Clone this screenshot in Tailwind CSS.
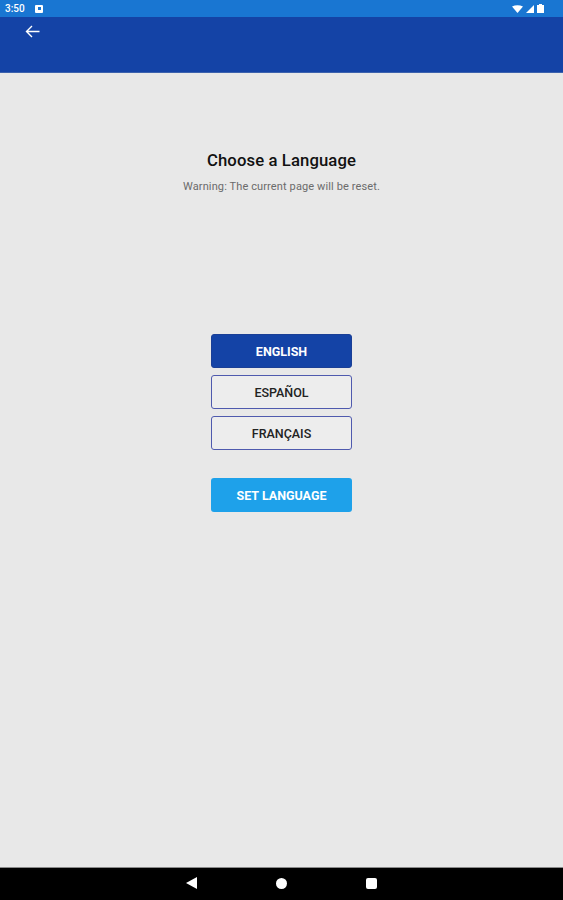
<!DOCTYPE html>
<html lang="en">
<head>
  <meta charset="utf-8" />
  <title>Choose a Language</title>
  <script src="https://cdn.jsdelivr.net/npm/@tailwindcss/browser@4"></script>
</head>
<body class="h-[900px] w-[563px] overflow-hidden flex flex-col bg-[#e8e8e8] font-['Roboto',sans-serif]">
  <!-- status bar -->
  <div class="h-[17px] bg-[#1976d2] flex items-center pl-[5px] pr-[19px] text-white">
    <span class="text-[10px] font-medium leading-none w-[30px]">3:50</span>
    <div class="w-[8px] h-[8px] bg-white rounded-[1px] flex items-center justify-center">
      <div class="w-[3px] h-[3px] bg-[#1976d2]"></div>
    </div>
    <div class="ml-auto flex items-center gap-[3px]">
      <svg width="11" height="8" viewBox="0 0 11 8"><path d="M0 1.5 Q5.5 -1 11 1.5 L5.5 8 Z" fill="#fff"/></svg>
      <svg width="8" height="8" viewBox="0 0 8 8"><path d="M8 0 V8 H0 Z" fill="#fff"/></svg>
      <svg width="7" height="9" viewBox="0 0 7 9"><path d="M2 0 H5 V1 H7 V9 H0 V1 H2 Z" fill="#fff"/></svg>
    </div>
  </div>

  <!-- app bar -->
  <div class="h-[56px] bg-[#1443a6] pl-[25px] pt-[8px] border-b border-[#3c62ad]">
    <svg width="15" height="13" viewBox="0 0 15 13" fill="none" stroke="#fff" stroke-width="1.4">
      <path d="M14.5 6.5 H1.5 M7 1 L1.5 6.5 L7 12" />
    </svg>
  </div>

  <!-- content -->
  <main class="flex-1 flex flex-col items-center">
    <h1 class="mt-[77px] text-[16.7px] leading-[22px] font-medium text-[#111] tracking-[0.1px]">Choose a Language</h1>
    <p class="mt-[7px] text-[11px] leading-[16px] text-[#6b6b6b] tracking-[0.12px]">Warning: The current page will be reset.</p>

    <div class="mt-[139px] w-[141px] flex flex-col gap-[7px]">
      <button class="h-[34px] pt-[2px] rounded-[3px] bg-[#1443a6] border border-[#1a3f96] text-white text-[12.5px] font-bold">ENGLISH</button>
      <button class="h-[34px] pt-[2px] rounded-[3px] bg-[#ededed] border-[1.5px] border-[#4f5aae] text-[#222] text-[12.5px] font-medium">ESPAÑOL</button>
      <button class="h-[34px] pt-[2px] rounded-[3px] bg-[#ededed] border-[1.5px] border-[#4f5aae] text-[#222] text-[12.5px] font-medium">FRANÇAIS</button>
      <button class="mt-[21px] h-[34px] pt-[2px] rounded-[3px] bg-[#1ea1ea] text-white text-[12.5px] font-bold">SET LANGUAGE</button>
    </div>
  </main>

  <!-- nav bar -->
  <div class="h-[33px] pb-[2px] bg-black border-t border-[#8a8a8a] flex items-center justify-center gap-[79px]">
    <svg width="11" height="12" viewBox="0 0 11 12"><path d="M11 0 V12 L0 6 Z" fill="#fff"/></svg>
    <div class="w-[11px] h-[11px] rounded-full bg-white"></div>
    <div class="w-[11px] h-[11px] rounded-[2px] bg-white"></div>
  </div>
</body>
</html>
